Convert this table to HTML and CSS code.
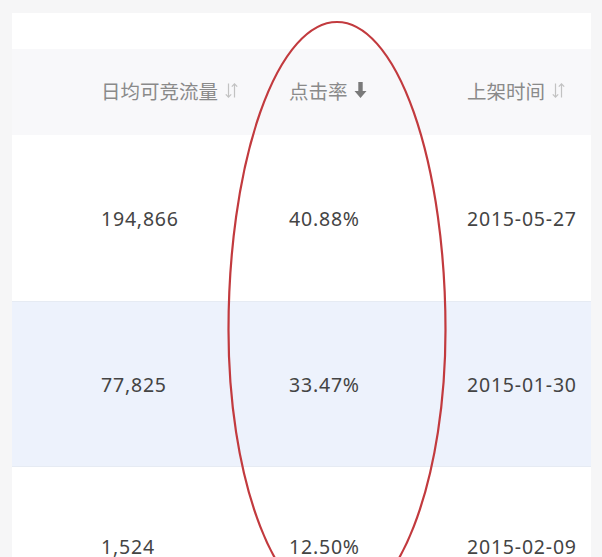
FILE: index.html
```html
<!DOCTYPE html>
<html lang="zh">
<head>
<meta charset="utf-8">
<title>表格</title>
<link rel="stylesheet" href="styles.css">
</head>
<body>
<div class="page">
  <div class="panel">
    <div class="panel-top"></div>
    <div class="row head">
      <div class="cell"></div>
      <div class="cell">日均可竞流量<svg class="sort" width="15" height="17" viewBox="0 0 15 17"><path d="M4.5 1.5V15M1.8 12.3L4.5 15.2L7.2 12.3M10.5 15.5V2M7.8 4.7L10.5 1.8L13.2 4.7" fill="none" stroke="#c2c2c2" stroke-width="1.2"/></svg></div>
      <div class="cell">点击率<svg class="sort active" width="13" height="18" viewBox="0 0 13 18"><path d="M4.3 1H8.7V10H12.5L6.5 17L0.5 10H4.3Z" fill="#7a7a7a"/></svg></div>
      <div class="cell">上架时间<svg class="sort" width="15" height="17" viewBox="0 0 15 17"><path d="M4.5 1.5V15M1.8 12.3L4.5 15.2L7.2 12.3M10.5 15.5V2M7.8 4.7L10.5 1.8L13.2 4.7" fill="none" stroke="#c2c2c2" stroke-width="1.2"/></svg></div>
    </div>
    <div class="row data">
      <div class="cell"></div>
      <div class="cell num">194,866</div>
      <div class="cell num">40.88%</div>
      <div class="cell num">2015-05-27</div>
    </div>
    <div class="row data hl">
      <div class="cell"></div>
      <div class="cell num">77,825</div>
      <div class="cell num">33.47%</div>
      <div class="cell num">2015-01-30</div>
    </div>
    <div class="row data last">
      <div class="cell"></div>
      <div class="cell num">1,524</div>
      <div class="cell num">12.50%</div>
      <div class="cell num">2015-02-09</div>
    </div>
  </div>
  <svg class="mark" width="602" height="557" viewBox="0 0 602 557">
    <path d="M228.5 330A108.5 308 0 0 1 445.5 330A108.5 278 0 0 1 228.5 330Z" fill="none" stroke="#c23a3e" stroke-width="2.2"/>
  </svg>
</div>
</body>
</html>
```

FILE: styles.css
```css
html, body {
  margin: 0;
  padding: 0;
  background: #f6f6f7;
}
.page {
  position: relative;
  width: 602px;
  height: 557px;
  overflow: hidden;
  padding: 13px 11px 0 12px;
  box-sizing: border-box;
  font-family: "Noto Sans", "Noto Sans CJK SC", sans-serif;
}
.panel {
  background: #ffffff;
}
.panel-top {
  height: 36px;
}
.row {
  display: grid;
  grid-template-columns: 89px 188px 178px 1fr;
  align-items: center;
}
.head {
  height: 86px;
  background: #f8f8fa;
  font-family: "Noto Sans CJK SC", sans-serif;
  font-size: 19.5px;
  color: #8a8a8a;
}
.head .cell {
  display: flex;
  align-items: center;
  gap: 6px;
  position: relative;
  top: -2px;
}
.sort {
  flex: none;
}
.data {
  height: 166px;
  font-size: 19.5px;
  letter-spacing: 0.8px;
  color: #444444;
}
.hl {
  background: #edf2fc;
  border-top: 1px solid #e6ebf3;
  border-bottom: 1px solid #e6ebf3;
  height: 164px;
}
.last .cell {
  position: relative;
  top: -4px;
}
.mark {
  position: absolute;
  left: 0;
  top: 0;
  pointer-events: none;
}
```
